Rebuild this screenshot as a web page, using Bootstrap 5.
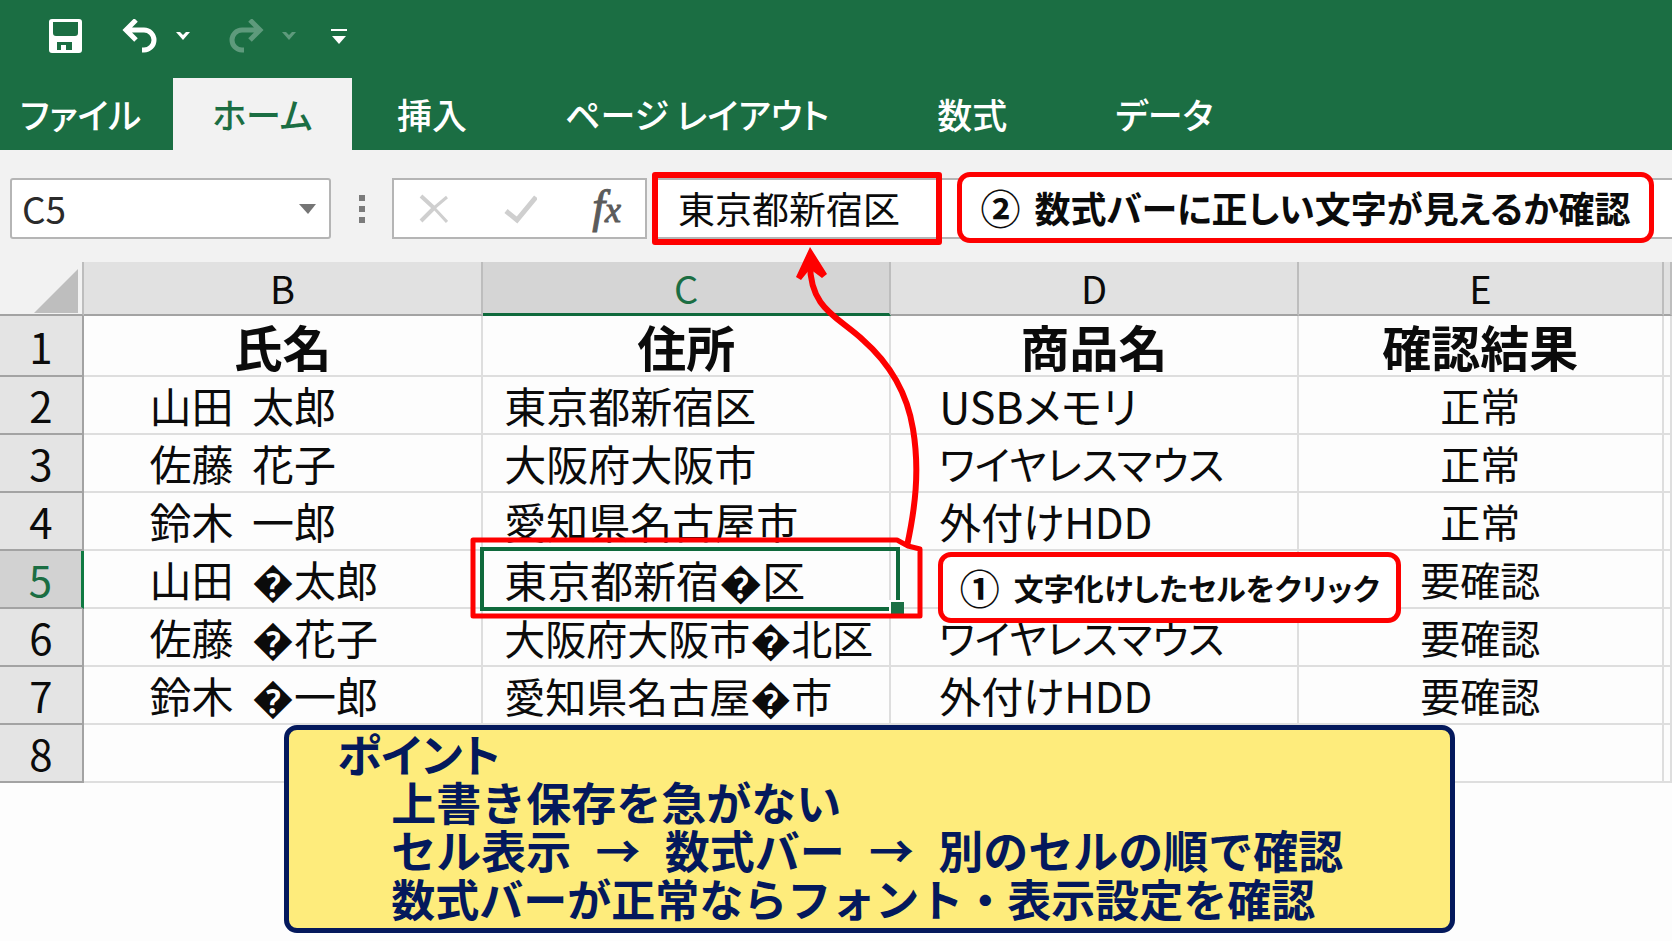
<!DOCTYPE html>
<html lang="ja">
<head>
<meta charset="utf-8">
<meta name="viewport" content="width=device-width, initial-scale=1">
<title>文字化けの確認手順</title>
<link href="https://cdn.jsdelivr.net/npm/bootstrap@5.3.0/dist/css/bootstrap.min.css" rel="stylesheet">
<style>
  :root { --xl-green: #1b6e43; --xl-mark: #fe0000; --xl-navy: #04195c; --xl-line: #dedede; --xl-edge: #a3a3a3; }
  body { font-family: "Noto Sans CJK JP", "Noto Sans", sans-serif; background: #fdfdfd; color: #0b0b0b; overflow-x: hidden; }
  button { background: none; border: 0; padding: 0; color: inherit; }
  .app-head { background: var(--xl-green); color: #fff; }
  .quick-bar { height: 78px; padding: 0 48px 6px; }
  .quick-bar svg { display: block; }
  .ribbon-tabs { height: 72px; font-size: 35px; line-height: 72px; font-weight: 500; font-feature-settings: "palt"; white-space: nowrap; }
  .ribbon-tabs a { display: block; color: #fff; text-decoration: none; padding: 0 45px; }
  .ribbon-tabs .tab-file { padding-left: 20px; width: 173px; }
  .ribbon-tabs .active { background: #f2f2f2; color: var(--xl-green); padding: 0 38px; width: 179px; text-align: center; }
  .tab-gap { margin-left: 18px; }
  .formula-bar { background: #f2f2f2; padding: 28px 0 23px 10px; }
  .bar-box { height: 61px; background: #fff; border: 2px solid #b5b5b5; }
  .name-box { width: 321px; border-radius: 3px; padding: 0 13px 0 10px; }
  .name-box input, .formula-box input { border: 0; outline: 0; background: transparent; min-width: 0; font-size: 37px; line-height: 40px; padding: 0 0 2px; }
  .name-box input { color: #2b2b2b; }
  .grip { margin: 0 27px 0 28px; }
  .tool-box { width: 255px; padding: 0 24px; }
  .fx-mark { font: italic 46px/44px "Liberation Serif", serif; color: #5b5b5b; -webkit-text-stroke: 1px #5b5b5b; }
  .fx-mark small { font-size: 36px; }
  .formula-box { margin-left: 9px; border-right: 0; padding-left: 20px; }
  .formula-box input { width: 100%; color: #0b0b0b; }
  .frame-formula { left: -6px; top: -8px; width: 290px; height: 73px; border: 6px solid var(--xl-mark); border-radius: 3px; pointer-events: none; }
  .callout-box { background: #fff; border: 5px solid var(--xl-mark); border-radius: 13px; height: 71px; padding-bottom: 2px; font-weight: 700; white-space: nowrap; font-feature-settings: "palt"; z-index: 3; }
  .callout-box .step-no { font-size: 40px; margin-right: 14px; }
  .callout-formula { left: 299px; top: -8px; width: 697px; font-size: 36px; }
  .callout-cell { left: 47px; top: 1px; width: 463px; font-size: 30px; }
  .sheet { table-layout: fixed; width: 100%; border-collapse: separate; border-spacing: 0; }
  .sheet th, .sheet td { padding: 0; height: 58px; line-height: 44px; font-size: 42px; white-space: nowrap; vertical-align: middle; border-right: 2px solid var(--xl-line); border-bottom: 2px solid var(--xl-line); font-weight: 400; }
  .sheet thead th { height: 54px; font-size: 38px; background: #e1e1e1; text-align: center; border-color: var(--xl-edge); border-right-color: #bdbdbd; }
  .sheet thead .corner { background: #f2f2f2; text-align: right; padding-right: 4px; }
  .sheet thead .col-on { background: #d5d5d5; color: var(--xl-green); border-bottom: 3px solid #0f6a3c; }
  .sheet tbody th { background: #e4e4e4; text-align: center; border-color: var(--xl-edge); }
  .sheet tbody .row-on { background: #d2d2d2; color: var(--xl-green); border-right: 3px solid #0f7a42; }
  .sheet .title-row > * { height: 61px; }
  .sheet .title-row td { font-size: 49px; font-weight: 700; text-align: center; }
  .sheet .c-name { padding-left: 66px; }
  .sheet .c-name span { margin-right: 9px; }
  .sheet .c-addr { padding-left: 21px; }
  .sheet .c-item { padding-left: 48px; font-feature-settings: "palt"; }
  .sheet .c-state { text-align: center; font-size: 40px; }
  .sheet .size-40 { font-size: 40px; }
  .sheet .size-41 { font-size: 41px; }
  .sheet .size-43 { font-size: 43px; }
  .pick { left: -3px; right: -11px; top: -4px; bottom: -4px; border: 4px solid #0f6a3c; z-index: 1; }
  .pick::after { content: ""; position: absolute; right: -8px; bottom: -7px; width: 15px; height: 14px; background: #1b7045; border: 2px solid #fff; border-width: 2px 0 0 2px; }
  .mark-art { left: -13px; bottom: -12px; z-index: 2; pointer-events: none; }
  .note-panel { position: relative; z-index: 3; width: 70%; margin: -58px 0 7px 17%; padding: 0 48px 6px; background: #feec7c; border: 5px solid var(--xl-navy); border-radius: 13px; color: var(--xl-navy); font-size: 45px; line-height: 48px; font-weight: 700; white-space: nowrap; }
  .note-panel h2, .note-panel p { font: inherit; margin: 0; }
  .note-panel h2 { font-feature-settings: "palt"; }
  .note-panel .note-lines { padding-left: 54px; }
  .note-panel .note-last { font-size: 44px; }
  .note-panel .flow-mark { margin: 0 14px; }
</style>
</head>
<body>
<header class="app-head">
  <div class="quick-bar d-flex align-items-center">
    <button type="button" aria-label="上書き保存"><svg width="34" height="34" viewBox="0 0 34 34"><path fill="#fff" fill-rule="evenodd" d="M3 0h28q3 0 3 3v28q0 3-3 3H4q-3 0-3-3V3q0-3 3-3zM5 3v11q0 3 3 3h19q3 0 3-3V3zM9 23v8h4v-5h5v5h6v-8z"/></svg></button>
    <button type="button" class="ms-4" aria-label="元に戻す"><svg class="ms-3" width="36" height="34" viewBox="0 0 36 34" fill="none" stroke="#fff" stroke-width="5"><path d="M14 1 4 11l10 10M4 11h18a10 10 0 0 1 0 20h-2"/></svg></button>
    <button type="button" class="ms-3" aria-label="元に戻す一覧"><svg class="me-1" width="18" height="10" viewBox="0 0 18 10"><path fill="#fff" d="M2 1h4l3 3 3-3h4L9 9z"/></svg></button>
    <button type="button" class="ms-4" aria-label="やり直し"><svg class="ms-2" width="36" height="34" viewBox="0 0 36 34" fill="none" stroke="#5e9a7c" stroke-width="5"><path d="M22 1l10 10-10 10M32 11H14a10 10 0 0 0 0 20h2"/></svg></button>
    <button type="button" class="ms-3" aria-label="やり直し一覧"><svg width="18" height="10" viewBox="0 0 18 10"><path fill="#5e9a7c" d="M2 1h4l3 3 3-3h4L9 9z"/></svg></button>
    <button type="button" class="ms-4" aria-label="クイック アクセスのカスタマイズ"><svg class="ms-2" width="18" height="18" viewBox="0 0 18 18" fill="#fff"><path d="M1 2h16v2H1zM2 9h14l-7 8z"/></svg></button>
  </div>
  <nav>
    <ul class="ribbon-tabs list-unstyled d-flex mb-0">
      <li><a class="tab-file" href="#">ファイル</a></li>
      <li><a class="active" href="#" aria-current="page">ホーム</a></li>
      <li><a href="#">挿入</a></li>
      <li><a class="ms-2" href="#">ページ レイアウト</a></li>
      <li><a class="tab-gap" href="#">数式</a></li>
      <li><a class="tab-gap" href="#">データ</a></li>
    </ul>
  </nav>
</header>

<section class="formula-bar d-flex align-items-center">
  <div class="bar-box name-box d-flex align-items-center flex-shrink-0">
    <input class="flex-fill" type="text" value="C5" aria-label="名前ボックス">
    <button type="button" aria-label="名前の一覧"><svg width="17" height="10" viewBox="0 0 17 10" class="d-block"><path fill="#757575" d="M0 0h17L9 10z"/></svg></button>
  </div>
  <svg class="grip flex-shrink-0" width="6" height="28" viewBox="0 0 6 28" fill="#7b7b7b" aria-hidden="true"><path d="M0 0h6v6H0zM0 11h6v6H0zM0 22h6v6H0z"/></svg>
  <div class="bar-box tool-box d-flex align-items-center justify-content-between flex-shrink-0">
    <button type="button" aria-label="キャンセル"><svg width="30" height="30" viewBox="0 0 30 30" class="d-block" fill="none" stroke="#cfcfcf"><path stroke-width="4" d="M3 2 16 14M16 14 3 27"/><path stroke-width="3" d="M29 3 16 14 29 28"/></svg></button>
    <button type="button" class="ms-3" aria-label="入力"><svg width="34" height="30" viewBox="0 0 34 30" class="d-block" fill="none" stroke="#cfcfcf" stroke-width="5"><path d="M3 17 14 26 33 3"/></svg></button>
    <button type="button" class="fx-mark ms-3" aria-label="関数の挿入">f<small>x</small></button>
  </div>
  <div class="bar-box formula-box d-flex align-items-center flex-fill position-relative">
    <input type="text" value="東京都新宿区" aria-label="数式バー">
    <div class="frame-formula position-absolute"></div>
    <div class="callout-box callout-formula position-absolute d-flex align-items-center justify-content-center"><span class="step-no">②</span>数式バーに正しい文字が見えるか確認</div>
  </div>
</section>

<main>
  <table class="sheet">
    <colgroup>
      <col style="width:5%"><col style="width:23.9%"><col style="width:24.4%"><col style="width:24.4%"><col style="width:21.8%"><col>
    </colgroup>
    <thead>
      <tr>
        <th class="corner" aria-label="すべて選択"><svg width="44" height="44" viewBox="0 0 44 44"><path fill="#bebebe" d="M44 0v44H0z"/></svg></th>
        <th>B</th><th class="col-on">C</th><th>D</th><th>E</th><th></th>
      </tr>
    </thead>
    <tbody>
      <tr class="title-row"><th>1</th><td>氏名</td><td>住所</td><td>商品名</td><td>確認結果</td><td></td></tr>
      <tr><th>2</th><td class="c-name"><span>山田</span> 太郎</td><td class="c-addr">東京都新宿区</td><td class="c-item size-43">USBメモリ</td><td class="c-state">正常</td><td></td></tr>
      <tr><th>3</th><td class="c-name"><span>佐藤</span> 花子</td><td class="c-addr">大阪府大阪市</td><td class="c-item size-40">ワイヤレスマウス</td><td class="c-state">正常</td><td></td></tr>
      <tr><th>4</th><td class="c-name"><span>鈴木</span> 一郎</td><td class="c-addr">愛知県名古屋市</td><td class="c-item">外付けHDD</td><td class="c-state">正常</td><td></td></tr>
      <tr><th class="row-on">5</th><td class="c-name"><span>山田</span> �太郎</td>
        <td class="c-addr size-43 position-relative">東京都新宿�区
          <div class="pick position-absolute"></div>
          <svg class="mark-art position-absolute" width="454" height="374" viewBox="0 0 454 374" fill="none" stroke="#fe0000" stroke-width="6" stroke-linejoin="round" aria-hidden="true">
            <path stroke-width="5" d="M3 295H427L438 301 450 304V371H3z"/>
            <path d="M437 301C445 264 450 226 443 184C437 147 418 117 393 95C367 71 340 64 340 18"/>
            <path fill="#fe0000" stroke="none" d="M340 2 357 29 352 33 340 24 331 35 326 32z"/>
          </svg>
        </td>
        <td class="c-item position-relative"><div class="callout-box callout-cell position-absolute d-flex align-items-center justify-content-center"><span class="step-no">①</span>文字化けしたセルをクリック</div></td>
        <td class="c-state">要確認</td><td></td></tr>
      <tr><th>6</th><td class="c-name"><span>佐藤</span> �花子</td><td class="c-addr size-41">大阪府大阪市�北区</td><td class="c-item size-40">ワイヤレスマウス</td><td class="c-state">要確認</td><td></td></tr>
      <tr><th>7</th><td class="c-name"><span>鈴木</span> �一郎</td><td class="c-addr size-41">愛知県名古屋�市</td><td class="c-item">外付けHDD</td><td class="c-state">要確認</td><td></td></tr>
      <tr><th>8</th><td></td><td></td><td></td><td></td><td></td></tr>
    </tbody>
  </table>
  <aside class="note-panel">
    <h2>ポイント</h2>
    <div class="note-lines">
      <p>上書き保存を急がない</p>
      <p>セル表示<span class="flow-mark"> → </span>数式バー<span class="flow-mark"> → </span>別のセルの順で確認</p>
      <p class="note-last">数式バーが正常ならフォント・表示設定を確認</p>
    </div>
  </aside>
</main>
<script src="https://cdn.jsdelivr.net/npm/bootstrap@5.3.0/dist/js/bootstrap.bundle.min.js"></script>
</body>
</html>
